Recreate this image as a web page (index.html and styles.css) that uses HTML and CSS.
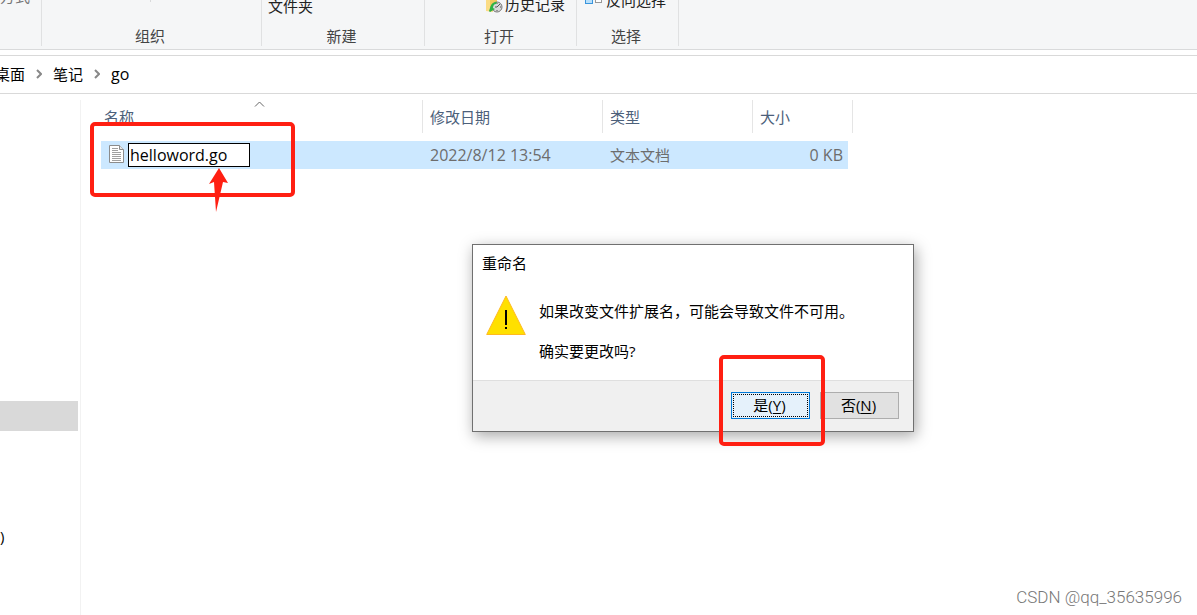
FILE: index.html
```html
<!DOCTYPE html>
<html lang="zh-CN">
<head>
	<meta charset="UTF-8">
	<meta name="viewport" content="width=device-width, initial-scale=1.0">
	<title>go</title>
	<link rel="stylesheet" href="styles.css">
</head>
<body>
	<!-- 功能区 -->
	<header class="ribbon">
		<section class="group group-clip">
			<button type="button" class="tool muted">方式</button>
		</section>
		<section class="group group-organize">
			<i class="tick"></i>
			<h2>组织</h2>
		</section>
		<section class="group group-new">
			<button type="button" class="tool folder">文件夹</button>
			<h2>新建</h2>
		</section>
		<section class="group group-open">
			<button type="button" class="tool history">
				<svg width="18" height="18" viewBox="0 0 18 18">
					<path d="M1 0h7v17l-7-1z" fill="#fbdc85"/>
					<path d="M5 0h7v9l-5 7H5z" fill="#f1c95a"/>
					<circle cx="12" cy="12" r="5" fill="#d9d9d9" stroke="#777"/>
					<path d="M12 12l3-3M12 12h-2M12 8v1M12 15v1M15 12h1" stroke="#555" fill="none"/>
					<path d="M4 16l1-3c1-4 3-6 7-6l-1 2c-2 0-3 2-3 4l2 1-5 3z" fill="#2fb344"/>
				</svg>历史记录</button>
			<h2>打开</h2>
		</section>
		<section class="group group-select">
			<button type="button" class="tool invert">
				<svg width="18" height="18" viewBox="0 0 18 18">
					<rect x="1.500" y="4.500" width="7" height="8" fill="#b9e0fb" stroke="#3a96dd"/>
					<rect x="11.500" y="5.500" width="6" height="6" fill="#fff" stroke="#999"/>
				</svg>反向选择</button>
			<h2>选择</h2>
		</section>
	</header>

	<!-- 地址栏 -->
	<nav class="address">
		<a href="#">桌面</a>
		<svg class="arrow" width="6" height="10" viewBox="0 0 6 10"><path d="M1 1l4 4-4 4"/></svg>
		<a href="#">笔记</a>
		<svg class="arrow" width="6" height="10" viewBox="0 0 6 10"><path d="M1 1l4 4-4 4"/></svg>
		<a href="#" class="latin">go</a>
	</nav>

	<main class="main">
		<aside class="side">
			<div class="side-current"></div>
			<div class="side-drive">)</div>
		</aside>
		<div class="list">
			<table class="files">
				<colgroup>
					<col class="c-name"><col class="c-date"><col class="c-type"><col class="c-size">
				</colgroup>
				<thead>
					<tr>
						<th><div>名称<svg class="sort" width="11" height="6" viewBox="0 0 11 6"><path d="M1 5.500L5.500 1 10 5.500"/></svg></div></th>
						<th><div>修改日期</div></th>
						<th><div>类型</div></th>
						<th><div>大小</div></th>
					</tr>
				</thead>
				<tbody>
					<tr>
						<td>
							<div class="name">
								<svg width="16" height="20" viewBox="0 0 16 20">
									<path d="M1.500.5h10l4 4v13h-14z" fill="#fff" stroke="#8c8c8c"/>
									<path d="M11.500.5v4h4" fill="#e8e8e8" stroke="#8c8c8c"/>
									<path d="M4 3.500h6M4 5.500h6M4 7.500h9M4 9.500h9M4 11.500h9M4 13.500h9M4 15.500h9" stroke="#a0a0a0"/>
								</svg>
								<input type="text" class="latin" value="helloword.go" aria-label="文件名" spellcheck="false">
							</div>
						</td>
						<td class="latin">2022/8/12 13:54</td>
						<td>文本文档</td>
						<td class="size latin">0 KB</td>
					</tr>
				</tbody>
			</table>
		</div>
	</main>

	<!-- 重命名提示框 -->
	<div class="dialog" role="dialog" aria-labelledby="dialog-title">
		<h1 id="dialog-title">重命名</h1>
		<div class="dialog-body">
			<svg width="40" height="41" viewBox="0 0 40 41">
				<path d="M20 1L39.300 39.500H.7z" fill="#ffe000" stroke="#ffb91f" stroke-linejoin="round"/>
				<path d="M19 15h2v15h-2zM19 32h2v2h-2z" fill="#000"/>
			</svg>
			<div class="dialog-text">
				<p>如果改变文件扩展名，可能会导致文件不可用。</p>
				<p>确实要更改吗?</p>
			</div>
		</div>
		<div class="dialog-foot">
			<button type="button" class="btn btn-yes">是(<u>Y</u>)</button>
			<button type="button" class="btn">否(<u>N</u>)</button>
		</div>
	</div>

	<!-- 红色标注 -->
	<div class="mark mark-name"></div>
	<div class="mark mark-yes"></div>
	<svg class="mark-arrow" width="20" height="44" viewBox="0 0 20 44"><path d="M10 0L19 15l-5-1-7 30L5 14l-5 2z" fill="#ff1f12"/></svg>

	<div class="watermark">CSDN @qq_35635996</div>
</body>
</html>
```
FILE: styles.css
```css
*{
	margin: 0;
	padding: 0;
	box-sizing: border-box;
}
body{
	min-height: 100vh;
	display: flex;
	flex-direction: column;
	position: relative;
	overflow: hidden;
	background: #fff;
	color: #000;
	font: 15px/20px "Open Sans", "Noto Sans CJK SC", sans-serif;
}
button,
input{
	font: inherit;
	color: inherit;
}
svg{
	flex: none;
}
.latin{
	font-size: 16px;
}

/* 功能区 */
.ribbon{
	display: flex;
	height: 50px;
	overflow: hidden;
	background: #f5f6f7;
	border-bottom: 1px solid #d9dadb;
}
.group{
	display: flex;
	flex-direction: column;
	justify-content: flex-end;
	align-items: center;
	height: 46px;
	padding-right: 3px;
	border-right: 1px solid #e0e1e2;
}
.group h2{
	font-size: 15px;
	font-weight: 400;
	line-height: 20px;
	color: #444;
}
.tool{
	display: flex;
	align-items: center;
	gap: 2px;
	background: none;
	border: 0;
	white-space: nowrap;
	color: #222;
}
.muted{
	color: #777;
	margin-bottom: 40px;
}
.folder{
	align-self: flex-start;
	margin: 0 0 10px 6px;
}
.history{
	align-self: flex-end;
	margin: 0 8px 12px 0;
}
.invert{
	align-self: flex-start;
	gap: 4px;
	margin: 0 0 16px 7px;
}
.tick{
	width: 1px;
	height: 2px;
	margin-bottom: 24px;
	background: #d9dadb;
}
.group-clip{
	width: 42px;
	align-items: flex-start;
}
.group-organize{
	width: 220px;
}
.group-new{
	width: 163px;
}
.group-open{
	width: 152px;
}
.group-select{
	width: 102px;
}

/* 地址栏 */
.address{
	display: flex;
	align-items: center;
	gap: 11px;
	height: 39px;
	margin-top: 5px;
	padding-bottom: 2px;
	border-top: 1px solid #d9d9d9;
	border-bottom: 1px solid #d9d9d9;
}
.address a{
	color: #000;
	text-decoration: none;
}
.address a:first-child{
	margin-left: -5px;
}
.arrow{
	fill: none;
	stroke: #888;
	stroke-width: 2;
}

/* 主体 */
.main{
	flex: 1;
	display: flex;
	padding-top: 6px;
}
.side{
	width: 81px;
	border-right: 1px solid #f2f2f2;
}
.side-current{
	width: 78px;
	height: 30px;
	margin-top: 301px;
	background: #d9d9d9;
}
.side-drive{
	margin-top: 95px;
}
.list{
	flex: 1;
	padding-left: 20px;
}
.files{
	width: 752px;
	table-layout: fixed;
	border-collapse: separate;
	border-spacing: 0;
}
.c-name{
	width: 322px;
}
.c-date{
	width: 180px;
}
.c-type{
	width: 150px;
}
.c-size{
	width: 100px;
}
.files th{
	padding-bottom: 8px;
	font-weight: 400;
	text-align: left;
	color: #4c607a;
}
.files th div{
	position: relative;
	height: 33px;
	line-height: 34px;
	padding-left: 7px;
	border-right: 1px solid #e5e5e5;
}
.files th:first-child div{
	padding-left: 3px;
}
.sort{
	position: absolute;
	left: 50%;
	top: 1px;
	margin-left: -8px;
	fill: none;
	stroke: #666;
}
.files td{
	height: 28px;
	padding-left: 7px;
	background: #cce8ff;
	color: #6d6d6d;
}
.files td.size{
	padding-right: 5px;
	text-align: right;
	border-right: 5px solid #fff;
}
.name{
	display: flex;
	align-items: center;
	gap: 4px;
}
.name input{
	width: 122px;
	height: 24px;
	padding-left: 1px;
	border: 1px solid #000;
	background: #fff;
	color: #000;
	outline: none;
}

/* 提示框 */
.dialog{
	position: absolute;
	left: 472px;
	top: 244px;
	width: 442px;
	background: #fff;
	border: 1px solid #707070;
	box-shadow: 2px 4px 14px rgba(0,0,0,.35);
}
.dialog h1{
	padding: 8px 9px 0;
	font-size: 15px;
	font-weight: 400;
	line-height: 20px;
}
.dialog-body{
	display: flex;
	gap: 13px;
	padding: 22px 13px 19px;
}
.dialog-text{
	display: flex;
	flex-direction: column;
	gap: 20px;
	padding-top: 6px;
}
.dialog-foot{
	display: flex;
	justify-content: flex-end;
	gap: 10px;
	padding: 11px 14px 12px;
	background: #f0f0f0;
	border-top: 1px solid #dfdfdf;
}
.btn{
	width: 79px;
	height: 27px;
	padding: 0 2px 2px 0;
	line-height: 20px;
	background: #e1e1e1;
	border: 1px solid #adadad;
}
.btn-yes{
	background: #e5f1fb;
	border-color: #0078d7;
	outline: 1px dotted #000;
	outline-offset: -3px;
}
.btn u{
	text-underline-offset: 2px;
}

/* 标注 */
.mark{
	position: absolute;
	border: 4px solid #ff1f12;
	border-radius: 5px;
}
.mark-name{
	left: 90px;
	top: 122px;
	width: 205px;
	height: 75px;
}
.mark-yes{
	left: 719px;
	top: 355px;
	width: 106px;
	height: 91px;
}
.mark-arrow{
	position: absolute;
	left: 209px;
	top: 168px;
}
.watermark{
	position: absolute;
	right: 15px;
	bottom: 8px;
	font: 300 17px/20px Roboto, sans-serif;
	color: #777;
}
```
